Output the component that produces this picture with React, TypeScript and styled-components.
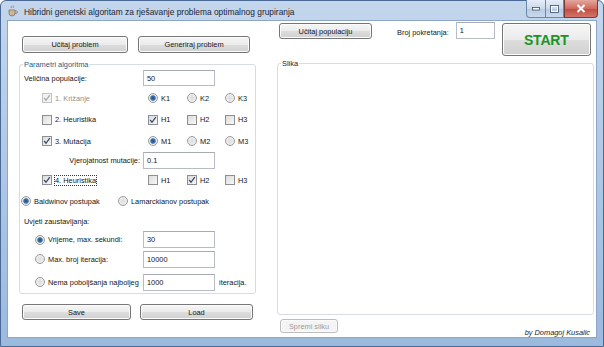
import styled, { createGlobalStyle } from "styled-components";

const Global = createGlobalStyle`
  html, body {
    margin: 0;
    padding: 0;
    background: #ffffff;
  }
  * {
    box-sizing: border-box;
  }
`;

const Frame = styled.div`
  width: 604px;
  height: 347px;
  display: flex;
  flex-direction: column;
  background: linear-gradient(#c3d6ec, #aac4e4 60%, #9cb9de);
  border: 1px solid #4a6a95;
  border-radius: 6px 6px 0 0;
  padding: 0 6px 8px 6px;
  font-family: "Liberation Sans", "DejaVu Sans", sans-serif;
  font-size: 7.4px;
  color: #151515;
`;

const TitleBar = styled.div`
  height: 22px;
  display: flex;
  align-items: flex-start;
`;

const AppIcon = styled.svg`
  width: 11px;
  height: 12px;
  margin: 4px 6px 0 0;
  flex: none;
`;

const Caption = styled.div`
  font-size: 8.4px;
  color: #1b2635;
  margin-top: 6px;
  flex: 1;
  white-space: nowrap;
`;

const CapButtons = styled.div`
  display: flex;
  margin-top: -1px;
  margin-right: -1px;
`;

const CapBtn = styled.div<{ $w: number; $close?: boolean }>`
  width: ${(p) => p.$w}px;
  height: 18px;
  display: flex;
  align-items: center;
  justify-content: center;
  border: 1px solid ${(p) => (p.$close ? "#7b3a36" : "#6d87a8")};
  border-left-width: ${(p) => (p.$close ? 1 : 0)}px;
  border-top: none;
  background: ${(p) =>
    p.$close
      ? "linear-gradient(#e4a79e, #cf6a5d 50%, #c04a3c 51%, #d2756a)"
      : "linear-gradient(#e6eef8, #cad9ec 50%, #b5c9e2 51%, #c9daee)"};
  &:first-child {
    border-left-width: 1px;
    border-bottom-left-radius: 4px;
  }
  &:last-child {
    border-bottom-right-radius: 4px;
  }
`;

const Body = styled.div`
  flex: 1;
  display: flex;
  background: #ffffff;
  border: 1px solid #8ea6c5;
`;

const LeftCol = styled.div`
  width: 263px;
  padding-left: 10px;
  display: flex;
  flex-direction: column;
`;

const RightCol = styled.div`
  flex: 1;
  padding-left: 7px;
  padding-right: 2px;
  display: flex;
  flex-direction: column;
`;

const ButtonRow = styled.div<{ $top: number; $gap: number }>`
  display: flex;
  gap: ${(p) => p.$gap}px;
  margin-top: ${(p) => p.$top}px;
  padding-left: 4px;
`;

const Button = styled.div<{ $w: number; $h?: number; $disabled?: boolean }>`
  width: ${(p) => p.$w}px;
  height: ${(p) => p.$h ?? 17}px;
  flex: none;
  display: flex;
  align-items: center;
  justify-content: center;
  white-space: nowrap;
  border: 1px solid ${(p) => (p.$disabled ? "#bdbdbd" : "#767676")};
  border-radius: 3px;
  color: ${(p) => (p.$disabled ? "#9a9a9a" : "#151515")};
  background: ${(p) =>
    p.$disabled
      ? "#f4f4f4"
      : "linear-gradient(#f6f6f6, #ebebeb 50%, #dddddd 51%, #d0d0d0)"};
  box-shadow: inset 0 0 0 1px ${(p) => (p.$disabled ? "#fbfbfb" : "#fcfcfc")};
`;

const StartButton = styled(Button)`
  font-weight: bold;
  font-size: 14px;
  color: #1a9526;
  letter-spacing: -0.2px;
`;

const Group = styled.div<{ $w: number; $h: number; $top: number; $ml: number }>`
  position: relative;
  width: ${(p) => p.$w}px;
  height: ${(p) => p.$h}px;
  margin-top: ${(p) => p.$top}px;
  margin-left: ${(p) => p.$ml}px;
  border: 1px solid #d7dde3;
  border-radius: 3px;
  padding-top: 4px;
  flex: none;
`;

const Legend = styled.span<{ $color: string }>`
  position: absolute;
  left: 3px;
  top: -6px;
  padding: 0 1px;
  background: #fff;
  color: ${(p) => p.$color};
  line-height: 11px;
`;

const Row = styled.div<{ $h: number; $pl?: number }>`
  height: ${(p) => p.$h}px;
  display: flex;
  align-items: center;
  padding-left: ${(p) => p.$pl ?? 4}px;
`;

const Cell = styled.div<{ $w: number; $right?: boolean }>`
  width: ${(p) => p.$w}px;
  flex: none;
  display: flex;
  align-items: center;
  justify-content: ${(p) => (p.$right ? "flex-end" : "flex-start")};
  padding-right: ${(p) => (p.$right ? 3 : 0)}px;
`;

const Label = styled.span<{ $disabled?: boolean; $focus?: boolean }>`
  color: ${(p) => (p.$disabled ? "#8f8f8f" : "#151515")};
  white-space: nowrap;
  outline: ${(p) => (p.$focus ? "1px dotted #333" : "none")};
  outline-offset: 0px;
`;

const After = styled(Label)`
  margin-left: 4px;
`;

const Field = styled.div<{ $w: number; $h?: number }>`
  width: ${(p) => p.$w}px;
  height: ${(p) => p.$h ?? 17}px;
  flex: none;
  border: 1px solid #b7bcc4;
  border-top-color: #a6aab2;
  background: #fff;
  display: flex;
  align-items: center;
  padding-left: 3px;
`;

const Box = styled.span<{ $disabled?: boolean }>`
  width: 10px;
  height: 10px;
  flex: none;
  margin-right: 3px;
  border: 1px solid ${(p) => (p.$disabled ? "#c4c4c4" : "#8e8f8f")};
  background: ${(p) =>
    p.$disabled ? "#f2f2f2" : "linear-gradient(135deg, #dcdcdc, #f7f7f7)"};
  display: flex;
  align-items: center;
  justify-content: center;
`;

const Dot = styled.span<{ $on?: boolean }>`
  width: 10px;
  height: 10px;
  flex: none;
  margin-right: 3px;
  border-radius: 50%;
  border: 1px solid #9a9a9a;
  background: ${(p) =>
    p.$on
      ? "radial-gradient(circle, #1f4f80 0, #3c78b0 2.3px, #e8e8e8 3.2px, #f6f6f6 5px)"
      : "radial-gradient(circle, #dcdcdc, #f6f6f6)"};
`;

const TopRight = styled.div`
  display: flex;
  align-items: flex-start;
  margin-top: 1px;
`;

const BrojLabel = styled.span`
  margin: 6px 7px 0 25px;
  white-space: nowrap;
`;

const BottomRight = styled.div`
  flex: 1;
  display: flex;
  align-items: flex-start;
  justify-content: space-between;
  padding: 4px 4px 0 3px;
`;

const Credit = styled.span`
  font-style: italic;
  margin-top: 9px;
  color: #222;
`;

function Check({ on, disabled, label, focus }: { on?: boolean; disabled?: boolean; label?: string; focus?: boolean }) {
  return (
    <>
      <Box $disabled={disabled}>
        {on && (
          <svg width="8" height="8" viewBox="0 0 8 8">
            <path d="M1.2 4 L3 6.3 L6.8 1.2" fill="none" stroke={disabled ? "#a8a8a8" : "#3a4a66"} strokeWidth="1.3" />
          </svg>
        )}
      </Box>
      {label && (
        <Label $disabled={disabled} $focus={focus}>
          {label}
        </Label>
      )}
    </>
  );
}

function Radio({ on, label }: { on?: boolean; label: string }) {
  return (
    <>
      <Dot $on={on} />
      <Label>{label}</Label>
    </>
  );
}

function OptionRow({ h, first, opts, kind, sel }: { h: number; first: React.ReactNode; opts: string[]; kind: "radio" | "check"; sel: boolean[] }) {
  return (
    <Row $h={h} $pl={22}>
      <Cell $w={106}>{first}</Cell>
      {opts.map((o, i) => (
        <Cell key={o} $w={i === 0 ? 39 : 38}>
          {kind === "radio" ? <Radio on={sel[i]} label={o} /> : <Check on={sel[i]} label={o} />}
        </Cell>
      ))}
    </Row>
  );
}

export default function App() {
  return (
    <>
      <Global />
      <Frame>
        <TitleBar>
          <AppIcon viewBox="0 0 11 12">
            <path d="M2 5 h6 v3 a3 3 0 0 1 -3 3 h0 a3 3 0 0 1 -3 -3z" fill="#c9b99a" stroke="#7b6a55" strokeWidth="0.7" />
            <path d="M8 6 h1.2 a1.2 1.2 0 0 1 0 2.4 h-1.2" fill="none" stroke="#7b6a55" strokeWidth="0.7" />
            <path d="M4 1 q1 1 0 2 M6 0.5 q1 1 0 2.5" fill="none" stroke="#d25a2a" strokeWidth="0.7" />
          </AppIcon>
          <Caption>Hibridni genetski algoritam za rješavanje problema optimalnog grupiranja</Caption>
          <CapButtons>
            <CapBtn $w={20}>
              <svg width="8" height="4" viewBox="0 0 8 4">
                <rect x="0.5" y="0.5" width="7" height="2.5" fill="#fff" stroke="#3d4f6a" strokeWidth="0.8" />
              </svg>
            </CapBtn>
            <CapBtn $w={18}>
              <svg width="9" height="8" viewBox="0 0 9 8">
                <rect x="0.5" y="0.5" width="8" height="7" fill="none" stroke="#3d4f6a" strokeWidth="0.8" />
                <rect x="1.5" y="1.5" width="6" height="5" fill="none" stroke="#fff" strokeWidth="1" />
              </svg>
            </CapBtn>
            <CapBtn $w={34} $close>
              <svg width="10" height="9" viewBox="0 0 10 9">
                <path d="M1.5 1 L8.5 8 M8.5 1 L1.5 8" stroke="#fff" strokeWidth="2" />
              </svg>
            </CapBtn>
          </CapButtons>
        </TitleBar>
        <Body>
          <LeftCol>
            <ButtonRow $top={15} $gap={10}>
              <Button $w={106}>Učitaj problem</Button>
              <Button $w={112}>Generiraj problem</Button>
            </ButtonRow>
            <Group $w={237} $h={230} $top={11} $ml={1}>
              <Legend $color="#1d5f86">Parametri algoritma</Legend>
              <Row $h={18}>
                <Cell $w={119}>
                  <Label>Veličina populacije:</Label>
                </Cell>
                <Field $w={72} $h={16}>50</Field>
              </Row>
              <OptionRow
                h={22}
                first={<Check on disabled label="1. Križanje" />}
                opts={["K1", "K2", "K3"]}
                kind="radio"
                sel={[true, false, false]}
              />
              <OptionRow
                h={21}
                first={<Check label="2. Heuristika" />}
                opts={["H1", "H2", "H3"]}
                kind="check"
                sel={[true, false, false]}
              />
              <OptionRow
                h={22}
                first={<Check on label="3. Mutacija" />}
                opts={["M1", "M2", "M3"]}
                kind="radio"
                sel={[true, false, false]}
              />
              <Row $h={17}>
                <Cell $w={119} $right>
                  <Label>Vjerojatnost mutacije:</Label>
                </Cell>
                <Field $w={72}>0.1</Field>
              </Row>
              <OptionRow
                h={22}
                first={<Check on focus label="4. Heuristika" />}
                opts={["H1", "H2", "H3"]}
                kind="check"
                sel={[false, true, false]}
              />
              <Row $h={20} $pl={1}>
                <Cell $w={97}>
                  <Radio on label="Baldwinov postupak" />
                </Cell>
                <Radio label="Lamarckianov postupak" />
              </Row>
              <Row $h={20}>
                <Label>Uvjeti zaustavljanja:</Label>
              </Row>
              <Row $h={17} $pl={15}>
                <Cell $w={108}>
                  <Radio on label="Vrijeme, max. sekundi:" />
                </Cell>
                <Field $w={72}>30</Field>
              </Row>
              <Row $h={22} $pl={15}>
                <Cell $w={108}>
                  <Radio label="Max. broj iteracija:" />
                </Cell>
                <Field $w={72}>10000</Field>
              </Row>
              <Row $h={24} $pl={15}>
                <Cell $w={108}>
                  <Radio label="Nema poboljšanja najboljeg" />
                </Cell>
                <Field $w={72}>1000</Field>
                <After>iteracija.</After>
              </Row>
            </Group>
            <ButtonRow $top={10} $gap={9}>
              <Button $w={109} $h={16}>Save</Button>
              <Button $w={113} $h={16}>Load</Button>
            </ButtonRow>
          </LeftCol>
          <RightCol>
            <TopRight>
              <Button $w={93} $h={16} style={{ marginTop: 1, marginLeft: 2 }}>
                Učitaj populaciju
              </Button>
              <BrojLabel>Broj pokretanja:</BrojLabel>
              <Field $w={39}>1</Field>
              <StartButton $w={89} $h={33} style={{ marginLeft: 7, marginTop: 1 }}>
                START
              </StartButton>
            </TopRight>
            <Group $w={317} $h={252} $top={7} $ml={0}>
              <Legend $color="#222">Slika</Legend>
            </Group>
            <BottomRight>
              <Button $w={58} $h={14} $disabled>
                Spremi sliku
              </Button>
              <Credit>by Domagoj Kusalic</Credit>
            </BottomRight>
          </RightCol>
        </Body>
      </Frame>
    </>
  );
}
